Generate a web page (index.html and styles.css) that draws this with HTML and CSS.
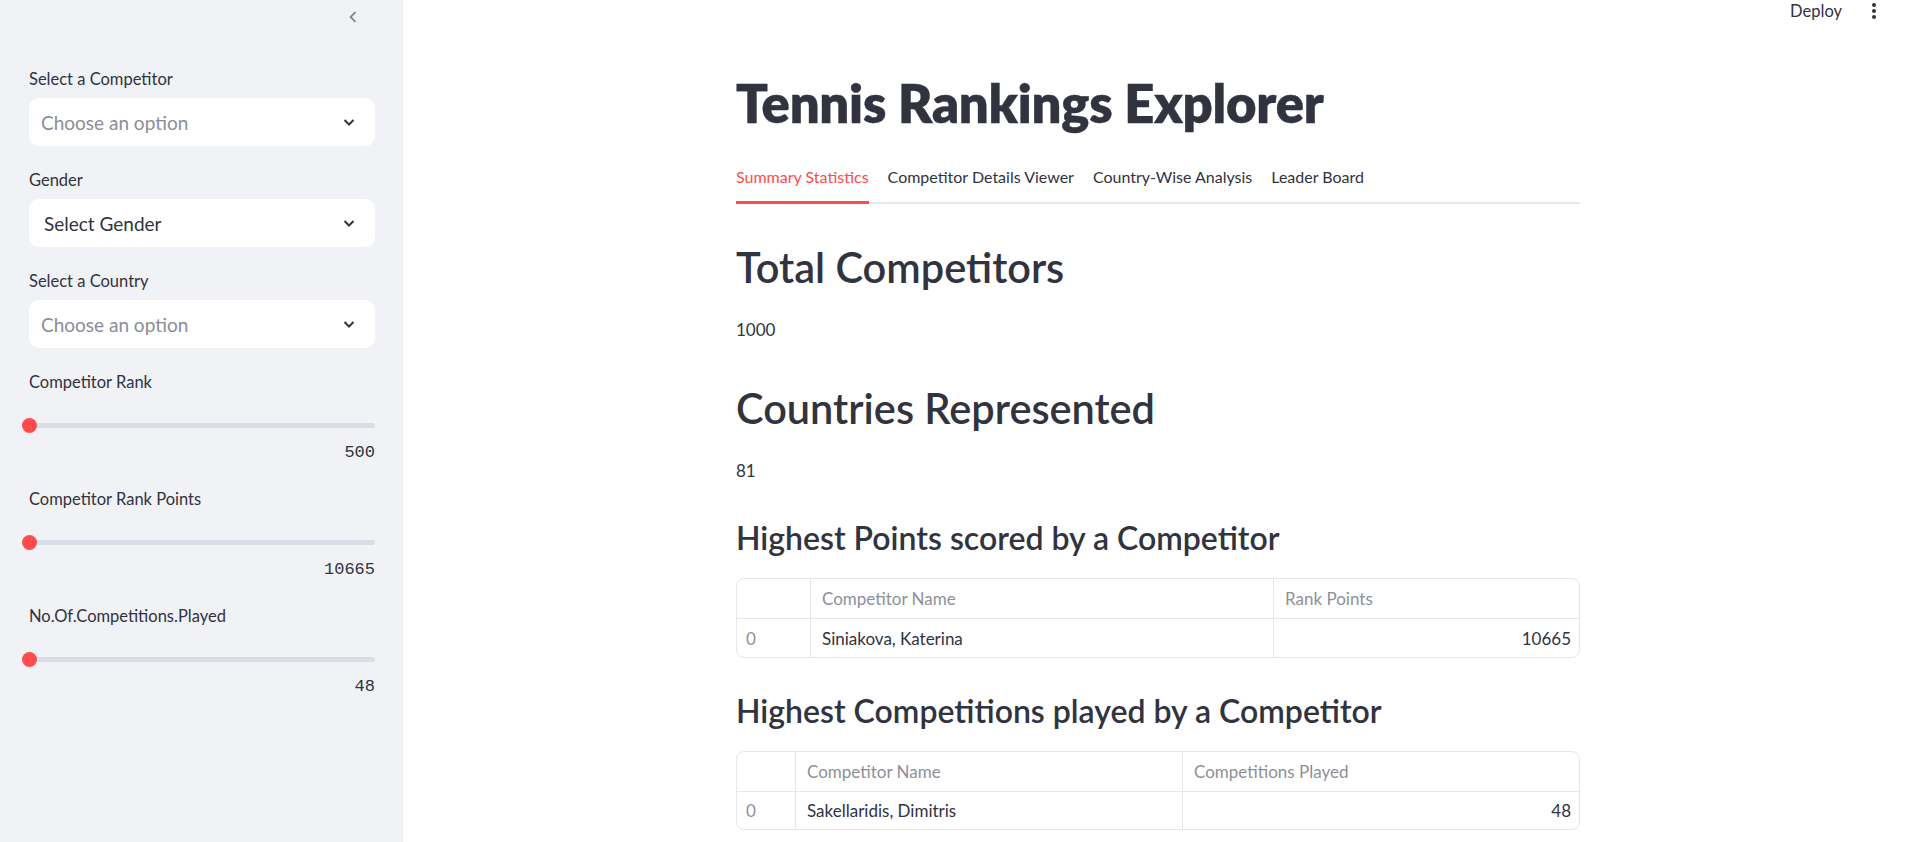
FILE: index.html
```html
<!DOCTYPE html>
<html lang="en">
<head>
<meta charset="utf-8">
<title>Tennis Rankings Explorer</title>
<link rel="stylesheet" href="styles.css">
</head>
<body>
<div class="app">
  <aside class="sidebar">
    <div class="sb-head">
      <button class="collapse" aria-label="Collapse sidebar">
        <svg width="20" height="20" viewBox="0 0 24 24"><path d="M15.41 7.41L14 6l-6 6 6 6 1.41-1.41L10.83 12z" fill="#808495"/></svg>
      </button>
    </div>
    <div class="sb-body">
      <div class="widget">
        <label class="wlabel">Select a Competitor</label>
        <div class="select"><span class="placeholder">Choose an option</span>
          <svg class="chev" width="14" height="14" viewBox="0 0 14 14"><path d="M2.5 5l4.5 4.5L11.5 5" fill="none" stroke="#31333f" stroke-width="2"/></svg>
        </div>
      </div>
      <div class="widget">
        <label class="wlabel">Gender</label>
        <div class="select"><span class="value">Select Gender</span>
          <svg class="chev" width="14" height="14" viewBox="0 0 14 14"><path d="M2.5 5l4.5 4.5L11.5 5" fill="none" stroke="#31333f" stroke-width="2"/></svg>
        </div>
      </div>
      <div class="widget">
        <label class="wlabel">Select a Country</label>
        <div class="select"><span class="placeholder">Choose an option</span>
          <svg class="chev" width="14" height="14" viewBox="0 0 14 14"><path d="M2.5 5l4.5 4.5L11.5 5" fill="none" stroke="#31333f" stroke-width="2"/></svg>
        </div>
      </div>
      <div class="widget slider">
        <label class="wlabel">Competitor Rank</label>
        <div class="track-wrap"><div class="track"></div><div class="thumb"></div></div>
        <div class="svalue">500</div>
      </div>
      <div class="widget slider">
        <label class="wlabel">Competitor Rank Points</label>
        <div class="track-wrap"><div class="track"></div><div class="thumb"></div></div>
        <div class="svalue">10665</div>
      </div>
      <div class="widget slider">
        <label class="wlabel">No.Of.Competitions.Played</label>
        <div class="track-wrap"><div class="track"></div><div class="thumb"></div></div>
        <div class="svalue">48</div>
      </div>
    </div>
  </aside>

  <main class="main">
    <div class="toolbar">
      <span class="deploy">Deploy</span>
      <svg class="menu" width="20" height="20" viewBox="0 0 20 20"><circle cx="10" cy="4" r="2" fill="#31333f"/><circle cx="10" cy="10" r="2" fill="#31333f"/><circle cx="10" cy="16" r="2" fill="#31333f"/></svg>
    </div>
    <div class="content">
      <h1 class="title">Tennis Rankings Explorer</h1>
      <nav class="tabs">
        <span class="tab active">Summary Statistics</span>
        <span class="tab">Competitor Details Viewer</span>
        <span class="tab">Country-Wise Analysis</span>
        <span class="tab">Leader Board</span>
      </nav>

      <h2 class="h2 first">Total Competitors</h2>
      <p class="num">1000</p>
      <h2 class="h2">Countries Represented</h2>
      <p class="num">81</p>

      <h3 class="h3">Highest Points scored by a Competitor</h3>
      <div class="table t1">
        <div class="cell head idx"></div>
        <div class="cell head">Competitor Name</div>
        <div class="cell head">Rank Points</div>
        <div class="cell idx">0</div>
        <div class="cell">Siniakova, Katerina</div>
        <div class="cell right">10665</div>
      </div>

      <h3 class="h3">Highest Competitions played by a Competitor</h3>
      <div class="table t2">
        <div class="cell head idx"></div>
        <div class="cell head">Competitor Name</div>
        <div class="cell head">Competitions Played</div>
        <div class="cell idx">0</div>
        <div class="cell">Sakellaridis, Dimitris</div>
        <div class="cell right">48</div>
      </div>
    </div>
  </main>
</div>
</body>
</html>
```

FILE: styles.css
```css
* { box-sizing: border-box; }
html, body { margin: 0; padding: 0; height: 100%; }
body {
  font-family: Lato, "Noto Sans", sans-serif;
  color: #31333f;
  background: #ffffff;
  overflow: hidden;
}
.app {
  display: flex;
  height: 842px;
}

/* Sidebar */
.sidebar {
  width: 403px;
  flex: 0 0 403px;
  background: #f0f2f6;
  display: flex;
  flex-direction: column;
}
.sb-head {
  height: 34px;
  display: flex;
  justify-content: flex-end;
  align-items: center;
  padding-right: 39px;
}
.collapse {
  border: 0;
  background: transparent;
  padding: 0;
  width: 22px;
  height: 22px;
  display: flex;
}
.collapse svg { width: 22px; height: 22px; }
.sb-body {
  padding: 33px 28px 0 29px;
  display: flex;
  flex-direction: column;
  gap: 22px;
}
.widget { display: flex; flex-direction: column; }
.wlabel {
  font-size: 16.5px;
  line-height: 24px;
  height: 24px;
  margin-bottom: 7px;
  color: #31333f;
}
.select {
  height: 48px;
  background: #ffffff;
  border-radius: 10px;
  display: flex;
  align-items: center;
  justify-content: space-between;
  padding: 0 19px 0 12px;
}
.placeholder { font-size: 19px; color: #8b8d96; }
.value { font-size: 19px; color: #31333f; padding-left: 3px; }

.slider .wlabel { margin-bottom: 0; }
.track-wrap {
  margin-top: 14px;
  height: 34px;
  display: flex;
  align-items: center;
  position: relative;
}
.track {
  flex: 1;
  height: 5px;
  border-radius: 3px;
  background: #d9dde6;
}
.thumb {
  position: absolute;
  left: -7px;
  top: 50%;
  width: 15px;
  height: 15px;
  margin-top: -7.5px;
  border-radius: 50%;
  background: #ff4b4b;
}
.svalue {
  text-align: right;
  font-family: "Liberation Mono", "DejaVu Sans Mono", monospace;
  font-size: 17px;
  line-height: 22px;
  height: 22px;
  margin-bottom: 1px;
  color: #31333f;
}

/* Main */
.main {
  flex: 1;
  display: flex;
  flex-direction: column;
  padding-left: 4px;
}
.toolbar {
  height: 22px;
  display: flex;
  justify-content: flex-end;
  align-items: center;
  padding-right: 25px;
  gap: 22px;
}
.deploy { font-size: 16.5px; color: #31333f; }
.content {
  width: 844px;
  margin: 0 auto;
  padding-top: 49px;
  display: flex;
  flex-direction: column;
}
.title {
  margin: 0;
  font-size: 52.5px;
  font-weight: 800;
  line-height: 64px;
  height: 64px;
  letter-spacing: -0.2px;
  -webkit-text-stroke: 0.4px #31333f;
}
.tabs {
  margin-top: 19px;
  display: flex;
  gap: 19px;
  border-bottom: 2px solid #e6e8ec;
  height: 50px;
}
.tab {
  font-size: 16px;
  line-height: 46px;
  height: 48px;
  color: #31333f;
  white-space: nowrap;
}
.tab.active {
  color: #ff4b4b;
  border-bottom: 3px solid #ff4b4b;
  height: 50px;
  margin-bottom: -2px;
}
.h2 {
  margin: 37px 0 0;
  font-size: 41.5px;
  font-weight: 600;
  line-height: 52px;
  height: 52px;
}
.num {
  margin: 22px 0 0;
  font-size: 17px;
  line-height: 29px;
  height: 29px;
}
.num + .h2 { margin-top: 38px; }
.h3 {
  margin: 33px 0 0;
  font-size: 32px;
  font-weight: 600;
  line-height: 40px;
  height: 40px;
}
.table {
  margin-top: 20px;
  display: grid;
  border: 1px solid #e5e7ec;
  border-radius: 8px;
  overflow: hidden;
}
.t1 { grid-template-columns: 74px 463px 1fr; }
.t2 { grid-template-columns: 59px 387px 1fr; }
.cell {
  height: 40px;
  line-height: 39px;
  padding: 0 8px 0 11px;
  font-size: 17px;
  color: #31333f;
  border-right: 1px solid #e5e7ec;
  border-bottom: 1px solid #e5e7ec;
  white-space: nowrap;
}
.cell:nth-child(3n) { border-right: 0; }
.cell:nth-child(n+4) { border-bottom: 0; height: 38px; }
.t2 .cell:nth-child(n+4) { height: 37px; line-height: 37px; }
.cell.head { color: #8e9099; }
.cell.idx { color: #8e9099; padding-left: 9px; }
.cell.right { text-align: right; }
```
